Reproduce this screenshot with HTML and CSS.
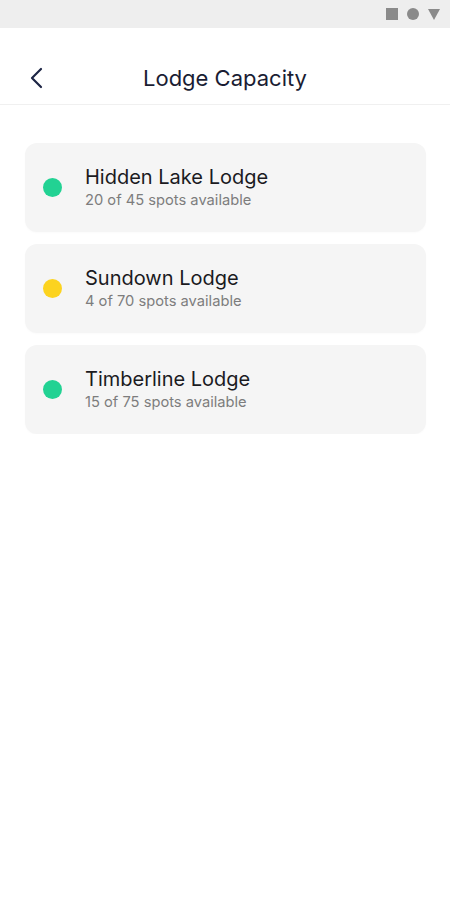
FILE: index.html
```html
<!DOCTYPE html>
<html lang="en">
<head>
    <meta charset="UTF-8">
    <meta name="viewport" content="width=device-width, initial-scale=1.0">
    <title>Lodge Capacity</title>
    <link rel="stylesheet" href="styles.css">
</head>
<body>

    <div class="status-bar">
        <span class="st-square"></span>
        <span class="st-circle"></span>
        <span class="st-triangle"></span>
    </div>

    <div class="header">
        <button class="back" aria-label="Back">
            <svg width="16" height="22" viewBox="0 0 16 22">
                <path d="M13 2 L4 11 L13 20" fill="none" stroke="#1d2545" stroke-width="2.2" stroke-linecap="round" stroke-linejoin="round"/>
            </svg>
        </button>
        <h1>Lodge Capacity</h1>
    </div>

    <div class="lista">
        <div class="card">
            <span class="dot verde"></span>
            <div class="info">
                <div class="nome">Hidden Lake Lodge</div>
                <div class="vagas">20 of 45 spots available</div>
            </div>
        </div>
        <div class="card">
            <span class="dot amarelo"></span>
            <div class="info">
                <div class="nome">Sundown Lodge</div>
                <div class="vagas">4 of 70 spots available</div>
            </div>
        </div>
        <div class="card">
            <span class="dot verde"></span>
            <div class="info">
                <div class="nome">Timberline Lodge</div>
                <div class="vagas">15 of 75 spots available</div>
            </div>
        </div>
    </div>

</body>
</html>
```

FILE: styles.css
```css
body {
    margin: 0;
    padding: 0;
    background-color: white;
    font-family: Inter, "Noto Sans", sans-serif;
    color: #1b1b1f;
}

/* barra de status */
.status-bar {
    height: 28px;
    background-color: #eeeeee;
    display: flex;
    align-items: center;
    justify-content: flex-end;
    gap: 9px;
    padding-right: 10px;
}

.st-square {
    width: 12px;
    height: 12px;
    background-color: #8a8a8a;
}

.st-circle {
    width: 12px;
    height: 12px;
    border-radius: 50%;
    background-color: #8a8a8a;
}

.st-triangle {
    width: 0;
    height: 0;
    border-left: 6px solid transparent;
    border-right: 6px solid transparent;
    border-top: 11px solid #8a8a8a;
}

/* cabecalho */
.header {
    position: relative;
    height: 52px;
    padding-top: 24px;
    display: flex;
    align-items: center;
    justify-content: center;
    border-bottom: 1px solid #f0f0f0;
}

.header h1 {
    margin: 0;
    font-size: 22px;
    font-weight: 400;
    color: #1a1d33;
}

.back {
    position: absolute;
    left: 28px;
    top: 39px;
    background: none;
    border: none;
    padding: 0;
    cursor: pointer;
}

/* lista de lodges */
.lista {
    display: flex;
    flex-direction: column;
    gap: 12px;
    padding: 38px 24px 0 25px;
}

.card {
    height: 89px;
    background-color: #f5f5f5;
    border-radius: 12px;
    display: flex;
    align-items: center;
    box-shadow: 0 1px 2px rgba(0, 0, 0, 0.02);
}

.dot {
    width: 19px;
    height: 19px;
    border-radius: 50%;
    margin-left: 18px;
    margin-right: 23px;
    flex-shrink: 0;
}

.verde {
    background-color: #22d293;
}

.amarelo {
    background-color: #fcd31f;
}

.nome {
    font-size: 20px;
    line-height: 24px;
    color: #1b1b1f;
}

.vagas {
    font-size: 14.7px;
    line-height: 22px;
    color: #7d7d7d;
}
```
